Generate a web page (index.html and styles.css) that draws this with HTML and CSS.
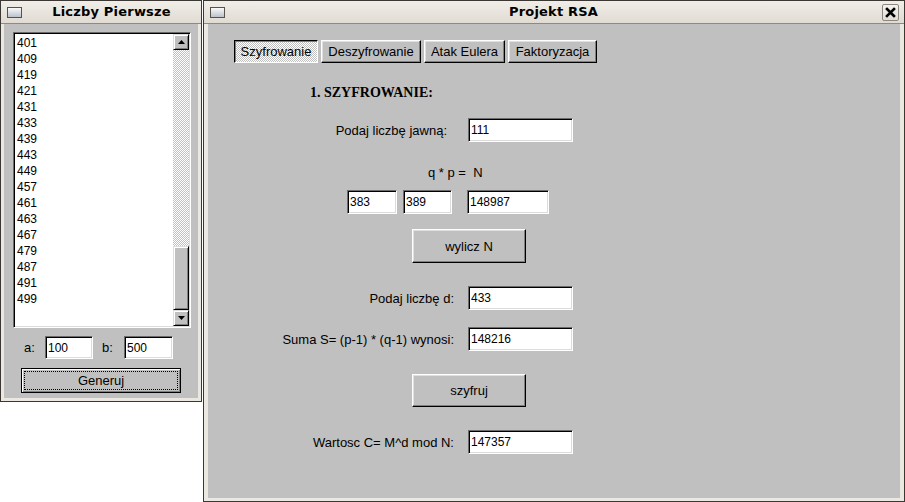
FILE: index.html
```html
<!DOCTYPE html>
<html lang="pl">
<head>
<meta charset="utf-8">
<title>Projekt RSA</title>
<link rel="stylesheet" href="styles.css">
</head>
<body>
<div class="desktop">
  <div class="win win-left">
    <div class="titlebar">
      <svg class="win-icon" width="15" height="11" viewBox="0 0 15 11">
        <defs><linearGradient id="gi1" x1="0" y1="0" x2="0" y2="1"><stop offset="0" stop-color="#fdfdfd"/><stop offset="1" stop-color="#b8bdc7"/></linearGradient></defs>
        <rect x="0.5" y="0.5" width="14" height="10" fill="url(#gi1)" stroke="#56534e"/>
      </svg>
      <div class="title">Liczby Pierwsze</div>
    </div>
    <div class="body body-left">
      <div class="listbox">
        <div class="list">
          <div>401</div><div>409</div><div>419</div><div>421</div><div>431</div><div>433</div>
          <div>439</div><div>443</div><div>449</div><div>457</div><div>461</div><div>463</div>
          <div>467</div><div>479</div><div>487</div><div>491</div><div>499</div>
        </div>
        <div class="scrollbar">
          <div class="sb-btn"><svg width="7" height="4" viewBox="0 0 7 4"><polygon points="3.5,0 7,4 0,4" fill="#000"/></svg></div>
          <div class="sb-track"></div>
          <div class="sb-thumb"></div>
          <div class="sb-btn"><svg width="7" height="4" viewBox="0 0 7 4"><polygon points="0,0 7,0 3.5,4" fill="#000"/></svg></div>
        </div>
      </div>
      <div class="range-row">
        <span class="lbl-a">a:</span>
        <input class="field field-a" value="100" readonly>
        <span class="lbl-b">b:</span>
        <input class="field field-b" value="500" readonly>
      </div>
      <button class="btn btn-default"><span class="focus">Generuj</span></button>
    </div>
  </div>

  <div class="win win-right">
    <div class="titlebar">
      <svg class="win-icon" width="15" height="11" viewBox="0 0 15 11">
        <defs><linearGradient id="gi2" x1="0" y1="0" x2="0" y2="1"><stop offset="0" stop-color="#fdfdfd"/><stop offset="1" stop-color="#b8bdc7"/></linearGradient></defs>
        <rect x="0.5" y="0.5" width="14" height="10" fill="url(#gi2)" stroke="#56534e"/>
      </svg>
      <div class="title">Projekt RSA</div>
      <div class="close-btn">
        <svg width="11" height="11" viewBox="0 0 11 11"><path d="M2 2 L9 9 M9 2 L2 9" stroke="#000" stroke-width="2.6" stroke-linecap="square"/></svg>
      </div>
    </div>
    <div class="body body-right">
      <div class="tabs">
        <button class="btn tab tab-active t1">Szyfrowanie</button>
        <button class="btn tab t2">Deszyfrowanie</button>
        <button class="btn tab t3">Atak Eulera</button>
        <button class="btn tab t4">Faktoryzacja</button>
      </div>
      <div class="heading">1. SZYFROWANIE:</div>
      <div class="row row-first">
        <span class="label label-jawna">Podaj liczbę jawną:</span>
        <input class="field field-wide" value="111" readonly>
      </div>
      <div class="qpn">q * p =&nbsp; N</div>
      <div class="triple">
        <input class="field field-q" value="383" readonly>
        <input class="field field-p" value="389" readonly>
        <input class="field field-n" value="148987" readonly>
      </div>
      <button class="btn action btn-wylicz">wylicz N</button>
      <div class="row row-d">
        <span class="label">Podaj liczbę d:</span>
        <input class="field field-wide" value="433" readonly>
      </div>
      <div class="row row-s">
        <span class="label">Suma S= (p-1) * (q-1) wynosi:</span>
        <input class="field field-wide" value="148216" readonly>
      </div>
      <button class="btn action btn-szyfruj">szyfruj</button>
      <div class="row row-c">
        <span class="label">Wartosc C= M^d mod N:</span>
        <input class="field field-wide" value="147357" readonly>
      </div>
    </div>
  </div>
</div>
</body>
</html>
```

FILE: styles.css
```css
html, body {
  margin: 0;
  padding: 0;
  background: #ffffff;
}

body {
  font-family: "Liberation Sans", Arial, sans-serif;
  font-size: 13px;
  color: #000;
}

.desktop {
  display: flex;
  align-items: flex-start;
  width: 905px;
  height: 502px;
  overflow: hidden;
}

/* ---------- windows ---------- */
.win {
  box-sizing: border-box;
  border: 1px solid #3b3834;
  background: #ebe8e1;
  display: flex;
  flex-direction: column;
}

.win-left {
  width: 202px;
  height: 402px;
}

.win-right {
  width: 702px;
  height: 502px;
  margin-left: 1px;
}

.titlebar {
  height: 22px;
  flex: none;
  display: flex;
  align-items: center;
  background: linear-gradient(#f1eee9, #e0dbd2);
  border-bottom: 1px solid #8f8a80;
}

.win-icon {
  flex: none;
  margin-left: 6px;
  display: block;
}

.title {
  flex: 1;
  text-align: center;
  font-family: "DejaVu Sans", sans-serif;
  font-weight: bold;
  font-size: 13px;
  letter-spacing: 0.2px;
  line-height: 22px;
}

.close-btn {
  flex: none;
  box-sizing: border-box;
  width: 17px;
  height: 17px;
  margin-right: 5px;
  border: 1px solid #8c877e;
  border-radius: 2px;
  background: linear-gradient(#f5f3ef, #e1dcd4);
  display: flex;
  align-items: center;
  justify-content: center;
}

.close-btn svg { display: block; }

.body {
  flex: 1;
  background: #c0c0c0;
  display: flex;
  flex-direction: column;
  align-items: flex-start;
}

.body-left {
  margin: 0 3px 3px 3px;
}

.body-right {
  margin: 0 4px 3px 4px;
}

/* ---------- bevels ---------- */
.btn {
  appearance: none;
  box-sizing: border-box;
  margin: 0;
  padding: 0;
  font-family: "Liberation Sans", Arial, sans-serif;
  font-size: 13px;
  color: #000;
  background: #c0c0c0;
  border: 1px solid;
  border-color: #ffffff #000000 #000000 #ffffff;
  box-shadow: inset -1px -1px #808080, inset 1px 1px #dfdfdf;
  display: flex;
  align-items: center;
  justify-content: center;
}

.field {
  box-sizing: border-box;
  margin: 0;
  padding: 0 0 0 2px;
  height: 24px;
  font-family: "Liberation Sans", Arial, sans-serif;
  font-size: 12px;
  color: #000;
  background: #ffffff;
  border: 1px solid;
  border-color: #6b6b6b #ffffff #ffffff #6b6b6b;
  box-shadow: inset 1px 1px #000000, inset -1px -1px #dcdcdc;
  outline: none;
}

/* ---------- left window ---------- */
.listbox {
  box-sizing: border-box;
  margin: 8px 0 0 9px;
  width: 178px;
  height: 296px;
  padding: 1px;
  display: flex;
  background: #ffffff;
  border: 1px solid;
  border-color: #6b6b6b #ffffff #ffffff #6b6b6b;
  box-shadow: inset 1px 1px #000000, inset -1px -1px #dcdcdc;
}

.list {
  flex: 1;
  padding: 1px 0 0 2px;
  font-size: 12px;
  line-height: 16px;
  background: #fff;
}

.scrollbar {
  width: 16px;
  flex: none;
  display: flex;
  flex-direction: column;
}

.sb-btn {
  box-sizing: border-box;
  height: 16px;
  flex: none;
  background: #c0c0c0;
  border: 1px solid;
  border-color: #dfdfdf #000000 #000000 #dfdfdf;
  box-shadow: inset 1px 1px #ffffff, inset -1px -1px #808080;
  display: flex;
  align-items: center;
  justify-content: center;
}

.sb-btn svg { display: block; }

.sb-track {
  flex: 1;
  background: repeating-conic-gradient(#ffffff 0 25%, #c0c0c0 0 50%) 0 0 / 2px 2px;
}

.sb-thumb {
  box-sizing: border-box;
  height: 64px;
  flex: none;
  background: #c0c0c0;
  border: 1px solid;
  border-color: #dfdfdf #000000 #000000 #dfdfdf;
  box-shadow: inset 1px 1px #ffffff, inset -1px -1px #808080;
}

.range-row {
  display: flex;
  align-items: center;
  margin-top: 8px;
}

.lbl-a {
  margin-left: 20px;
  width: 21px;
}

.lbl-b {
  margin-left: 9px;
  width: 22px;
}

.field-a { width: 48px; height: 23px; }
.field-b { width: 49px; height: 23px; }

.btn-default {
  margin: 9px 0 0 17px;
  width: 160px;
  height: 25px;
  padding: 2px;
  border: 1px solid #000;
  box-shadow: inset 1px 1px #ffffff, inset -1px -1px #808080;
  align-items: stretch;
}

.focus {
  flex: 1;
  border: 1px dotted #000;
  display: flex;
  align-items: center;
  justify-content: center;
}

/* ---------- right window ---------- */
.tabs {
  display: flex;
  gap: 3px;
  margin: 16px 0 0 26px;
}

.tab { height: 23px; }
.t1 { width: 84px; }
.t2 { width: 100px; }
.t3 { width: 81px; }
.t4 { width: 89px; }

.tab-active {
  border-color: #000000 #ffffff #ffffff #000000;
  box-shadow: inset 1px 1px #808080;
  background: repeating-conic-gradient(#ffffff 0 25%, #c0c0c0 0 50%) 0 0 / 2px 2px;
}

.heading {
  margin: 22px 0 0 102px;
  font-family: "Liberation Serif", "Times New Roman", serif;
  font-weight: bold;
  font-size: 14px;
  line-height: 16px;
}

.row {
  display: flex;
  align-items: center;
}

.label {
  width: 246px;
  margin-right: 14px;
  text-align: right;
}

.label-jawna { padding-right: 7px; box-sizing: border-box; }

.row-first { margin-top: 17px; }
.row-d { margin-top: 23px; }
.row-s { margin-top: 17px; }
.row-c { margin-top: 23px; }

.field-wide { width: 105px; }

.qpn {
  margin: 23px 0 0 220px;
  line-height: 16px;
}

.triple {
  display: flex;
  margin: 9px 0 0 139px;
}

.field-q { width: 50px; }
.field-p { width: 49px; margin-left: 6px; }
.field-n { width: 82px; margin-left: 15px; }

.action {
  width: 114px;
  margin-left: 204px;
}

.btn-wylicz { height: 34px; margin-top: 15px; }
.btn-szyfruj { height: 33px; margin-top: 23px; }
```
